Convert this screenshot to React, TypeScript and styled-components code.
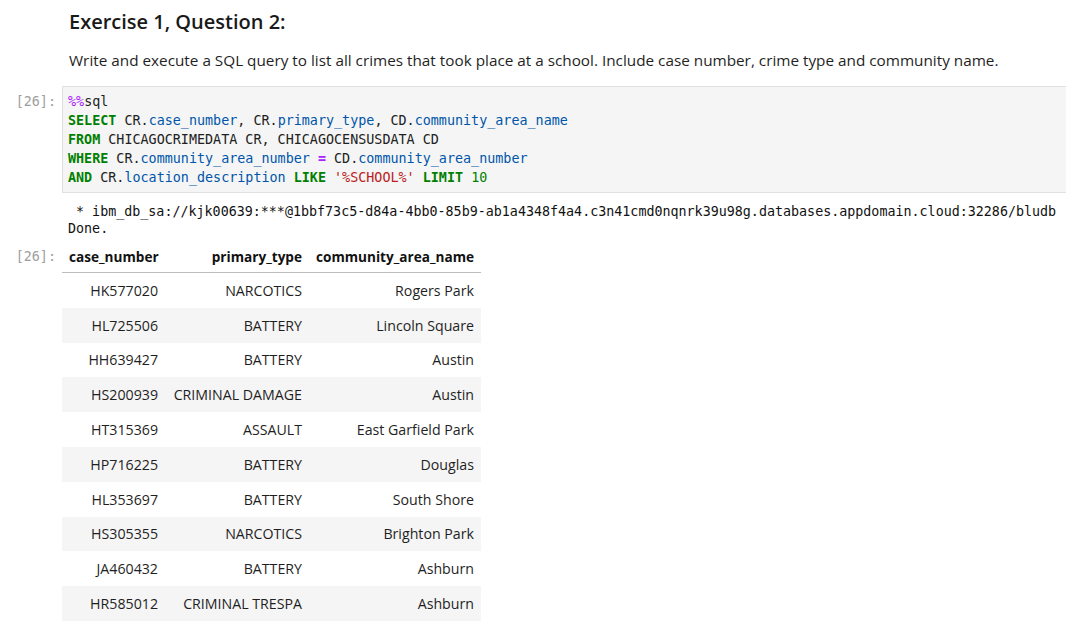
import React from 'react'
import styled, { createGlobalStyle } from 'styled-components'

const GlobalStyle = createGlobalStyle`
  html, body {
    margin: 0;
    padding: 0;
    background: #ffffff;
    overflow: hidden;
  }
  body {
    font-family: 'Open Sans', 'Noto Sans', sans-serif;
    color: #212121;
  }
`

const Notebook = styled.div`
  display: flex;
  flex-direction: column;
  padding-top: 9px;
  width: 1070px;
`

const Cell = styled.div`
  display: flex;
  flex-direction: column;
`

const Row = styled.div<{ $mt?: number }>`
  display: flex;
  align-items: flex-start;
  margin-top: ${p => p.$mt ?? 0}px;
`

const Prompt = styled.div<{ $pt?: number }>`
  flex: 0 0 62px;
  box-sizing: border-box;
  padding-right: 6px;
  padding-top: ${p => p.$pt ?? 0}px;
  text-align: right;
  font-family: 'DejaVu Sans Mono', 'Liberation Mono', monospace;
  font-size: 13.4px;
  line-height: 19px;
  color: #9e9e9e;
  white-space: pre;
`

const Markdown = styled.div`
  flex: 1;
  padding-left: 7px;
`

const Title = styled.h3`
  margin: 0;
  font-size: 20px;
  font-weight: 600;
  line-height: 26px;
  color: #1a1a1a;
`

const Paragraph = styled.p`
  margin: 14px 0 0;
  font-size: 15.3px;
  line-height: 22px;
  color: #1f1f1f;
`

const Editor = styled.pre`
  flex: 1;
  margin: 0;
  padding: 5px 5px;
  background: #f5f5f5;
  border: 1px solid #e0e0e0;
  font-family: 'DejaVu Sans Mono', 'Liberation Mono', monospace;
  font-size: 13.4px;
  line-height: 19px;
  color: #212121;
`

const Tok = styled.span<{ $k: 'kw' | 'var' | 'op' | 'str' | 'num' | 'magic' }>`
  color: ${p =>
    ({ kw: '#008000', var: '#0055aa', op: '#aa22ff', str: '#ba2121', num: '#008000', magic: '#aa22ff' })[p.$k]};
  font-weight: ${p => (p.$k === 'kw' || p.$k === 'op' ? 700 : 400)};
`

const Stream = styled.pre`
  flex: 1;
  margin: 0;
  padding-left: 6px;
  font-family: 'DejaVu Sans Mono', 'Liberation Mono', monospace;
  font-size: 13.35px;
  line-height: 17px;
  color: #111111;
`

const Table = styled.table`
  border-collapse: collapse;
  table-layout: fixed;
  width: 419px;
  margin-top: 3.5px;
  font-size: 14.2px;
  color: #1f1f1f;

  th, td {
    text-align: right;
    padding: 0 7px;
    white-space: nowrap;
    overflow: hidden;
  }

  th {
    font-size: 13.6px;
    font-weight: 700;
    height: 32px;
    border-bottom: 1px solid #bdbdbd;
    color: #111111;
  }

  td {
    height: 34.8px;
  }

  tbody tr:nth-child(even) {
    background: #f5f5f5;
  }
`

const K = ({ children }: { children: React.ReactNode }) => <Tok $k="kw">{children}</Tok>
const V = ({ children }: { children: React.ReactNode }) => <Tok $k="var">{children}</Tok>

const rows: [string, string, string][] = [
  ['HK577020', 'NARCOTICS', 'Rogers Park'],
  ['HL725506', 'BATTERY', 'Lincoln Square'],
  ['HH639427', 'BATTERY', 'Austin'],
  ['HS200939', 'CRIMINAL DAMAGE', 'Austin'],
  ['HT315369', 'ASSAULT', 'East Garfield Park'],
  ['HP716225', 'BATTERY', 'Douglas'],
  ['HL353697', 'BATTERY', 'South Shore'],
  ['HS305355', 'NARCOTICS', 'Brighton Park'],
  ['JA460432', 'BATTERY', 'Ashburn'],
  ['HR585012', 'CRIMINAL TRESPA', 'Ashburn'],
]

export default function App() {
  return (
    <>
      <GlobalStyle />
      <Notebook>
        <Cell>
          <Row>
            <Prompt />
            <Markdown>
              <Title>Exercise 1, Question 2:</Title>
              <Paragraph>
                Write and execute a SQL query to list all crimes that took place at a school. Include case number, crime type and community name.
              </Paragraph>
            </Markdown>
          </Row>
        </Cell>

        <Cell>
          <Row $mt={15}>
            <Prompt $pt={6}>[26]:</Prompt>
            <Editor>
              <Tok $k="magic">%%</Tok>sql{'\n'}
              <K>SELECT</K> CR.<V>case_number</V>, CR.<V>primary_type</V>, CD.<V>community_area_name</V>{'\n'}
              <K>FROM</K> CHICAGOCRIMEDATA CR, CHICAGOCENSUSDATA CD{'\n'}
              <K>WHERE</K> CR.<V>community_area_number</V> <Tok $k="op">=</Tok> CD.<V>community_area_number</V>{'\n'}
              <K>AND</K> CR.<V>location_description</V> <K>LIKE</K> <Tok $k="str">'%SCHOOL%'</Tok> <K>LIMIT</K>{' '}
              <Tok $k="num">10</Tok>
            </Editor>
          </Row>

          <Row $mt={9.5}>
            <Prompt />
            <Stream>
              {' * ibm_db_sa://kjk00639:***@1bbf73c5-d84a-4bb0-85b9-ab1a4348f4a4.c3n41cmd0nqnrk39u98g.databases.appdomain.cloud:32286/bludb\nDone.'}
            </Stream>
          </Row>

          <Row>
            <Prompt $pt={10}>[26]:</Prompt>
            <Table>
              <colgroup>
                <col style={{ width: 103 }} />
                <col style={{ width: 144 }} />
                <col style={{ width: 172 }} />
              </colgroup>
              <thead>
                <tr>
                  <th>case_number</th>
                  <th>primary_type</th>
                  <th>community_area_name</th>
                </tr>
              </thead>
              <tbody>
                {rows.map(r => (
                  <tr key={r[0]}>
                    <td>{r[0]}</td>
                    <td>{r[1]}</td>
                    <td>{r[2]}</td>
                  </tr>
                ))}
              </tbody>
            </Table>
          </Row>
        </Cell>
      </Notebook>
    </>
  )
}
